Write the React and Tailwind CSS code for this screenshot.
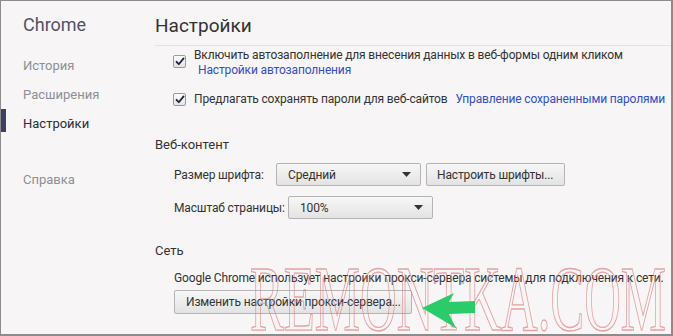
import React from 'react';

const font = { fontFamily: 'Roboto, "Noto Sans", sans-serif' };

const Check = () => (
  <span className="flex h-[13px] w-[13px] shrink-0 items-center justify-center rounded-[2px] border border-[#9a9a9a] bg-gradient-to-b from-[#fdfdfd] to-[#e4e4e4]">
    <svg width="10" height="9" viewBox="0 0 10 9">
      <path d="M1.5 4.8 L3.8 7.2 L8.6 1.4" fill="none" stroke="#1f2142" strokeWidth="1.8" strokeLinecap="round" strokeLinejoin="round" />
    </svg>
  </span>
);

const Select = ({ value, width }) => (
  <div className={`flex h-[23px] ${width} items-center justify-between rounded-[2px] border border-[#b4b4b4] bg-gradient-to-b from-[#f7f7f7] to-[#e3e3e3] pl-[11px] pr-[9px] text-[#333]`}>
    <span>{value}</span>
    <svg width="9" height="5" viewBox="0 0 9 5"><path d="M0 0 H9 L4.5 5 Z" fill="#333" /></svg>
  </div>
);

const Button = ({ children, className = '' }) => (
  <div className={`flex items-center rounded-[2px] border border-[#b4b4b4] bg-gradient-to-b from-[#f7f7f7] to-[#e3e3e3] px-[10px] text-[#333] ${className}`}>
    {children}
  </div>
);

export default function App() {
  const nav = [
    { label: 'История', mt: 'mt-[20px]' },
    { label: 'Расширения', mt: 'mt-[9px]' },
    { label: 'Настройки', mt: 'mt-[9px]', active: true },
    { label: 'Справка', mt: 'mt-[36px]' },
  ];

  return (
    <div className="relative flex h-[336px] w-[673px] overflow-hidden whitespace-nowrap border-t border-l border-r-2 border-b-2 border-[#8c8c8c] bg-[#f7f5f5] text-[12px] tracking-[-0.15px]" style={font}>
      {/* боковое меню */}
      <div className="relative w-[154px] shrink-0 pl-[22px] pt-[13px] text-[13px] tracking-normal">
        <div className="text-[18px] leading-[22px] text-[#505268]">Chrome</div>
        {nav.map((item) => (
          <div key={item.label} className={`${item.mt} h-[20px] leading-[20px] ${item.active ? 'text-[#2c2d3c]' : 'text-[#8a9098]'}`}>
            {item.label}
          </div>
        ))}
        <div className="absolute left-0 top-[108px] h-[23px] w-[5px] bg-[#3c4160]" />
      </div>

      {/* основная часть */}
      <div className="flex-1 text-[#333]">
        <div className="pt-[13px] text-[19px] leading-[24px] tracking-normal text-[#333]">Настройки</div>
        <div className="mt-[7px] h-px bg-[#e3e1e1]" />

        <div className="pl-[18px] pt-[2px]">
          <div className="flex items-start gap-[8px]">
            <div className="pt-[7px]"><Check /></div>
            <div className="leading-[15px]">
              <div>Включить автозаполнение для внесения данных в веб-формы одним кликом</div>
              <div className="pl-[4px] text-[#3450c4]">Настройки автозаполнения</div>
            </div>
          </div>
          <div className="mt-[13px] flex h-[16px] items-center gap-[8px]">
            <Check />
            <span>Предлагать сохранять пароли для веб-сайтов</span>
            <span className="text-[#3450c4]">Управление сохраненными паролями</span>
          </div>
        </div>

        <div className="mt-[29px] text-[13px] leading-[18px] tracking-normal">Веб-контент</div>
        <div className="mt-[9px] pl-[19px]">
          <div className="flex items-center">
            <span className="w-[102px]">Размер шрифта:</span>
            <Select value="Средний" width="w-[145px]" />
            <Button className="ml-[5px] h-[23px] w-[139px]">Настроить шрифты...</Button>
          </div>
          <div className="mt-[10px] flex items-center">
            <span className="w-[114px]">Масштаб страницы:</span>
            <Select value="100%" width="w-[145px]" />
          </div>
        </div>

        <div className="mt-[23px] text-[13px] leading-[18px] tracking-normal">Сеть</div>
        <div className="mt-[10px] pl-[19px]">
          <div className="leading-[16px]">Google Chrome использует настройки прокси-сервера системы для подключения к сети.</div>
          <Button className="mt-[4px] h-[24px] w-[238px] pl-[11px]">Изменить настройки прокси-сервера...</Button>
        </div>
      </div>

      {/* водяной знак */}
      <div
        className="pointer-events-none absolute left-[249px] top-[250px] origin-left scale-x-[0.54] whitespace-nowrap text-[94px] leading-[94px] tracking-normal text-transparent opacity-70"
        style={{ fontFamily: '"Liberation Serif", serif', WebkitTextStroke: '1.4px #e08080' }}
      >
        REMONTKA.COM
      </div>

      {/* стрелка */}
      <svg className="absolute left-[419px] top-[290px]" width="58" height="40" viewBox="0 0 58 40">
        <path d="M2 17 L34 2 L29 11 L55 10 L55 22 L29 23 L36 37 Z" fill="#2ccb6a" />
      </svg>
    </div>
  );
}
